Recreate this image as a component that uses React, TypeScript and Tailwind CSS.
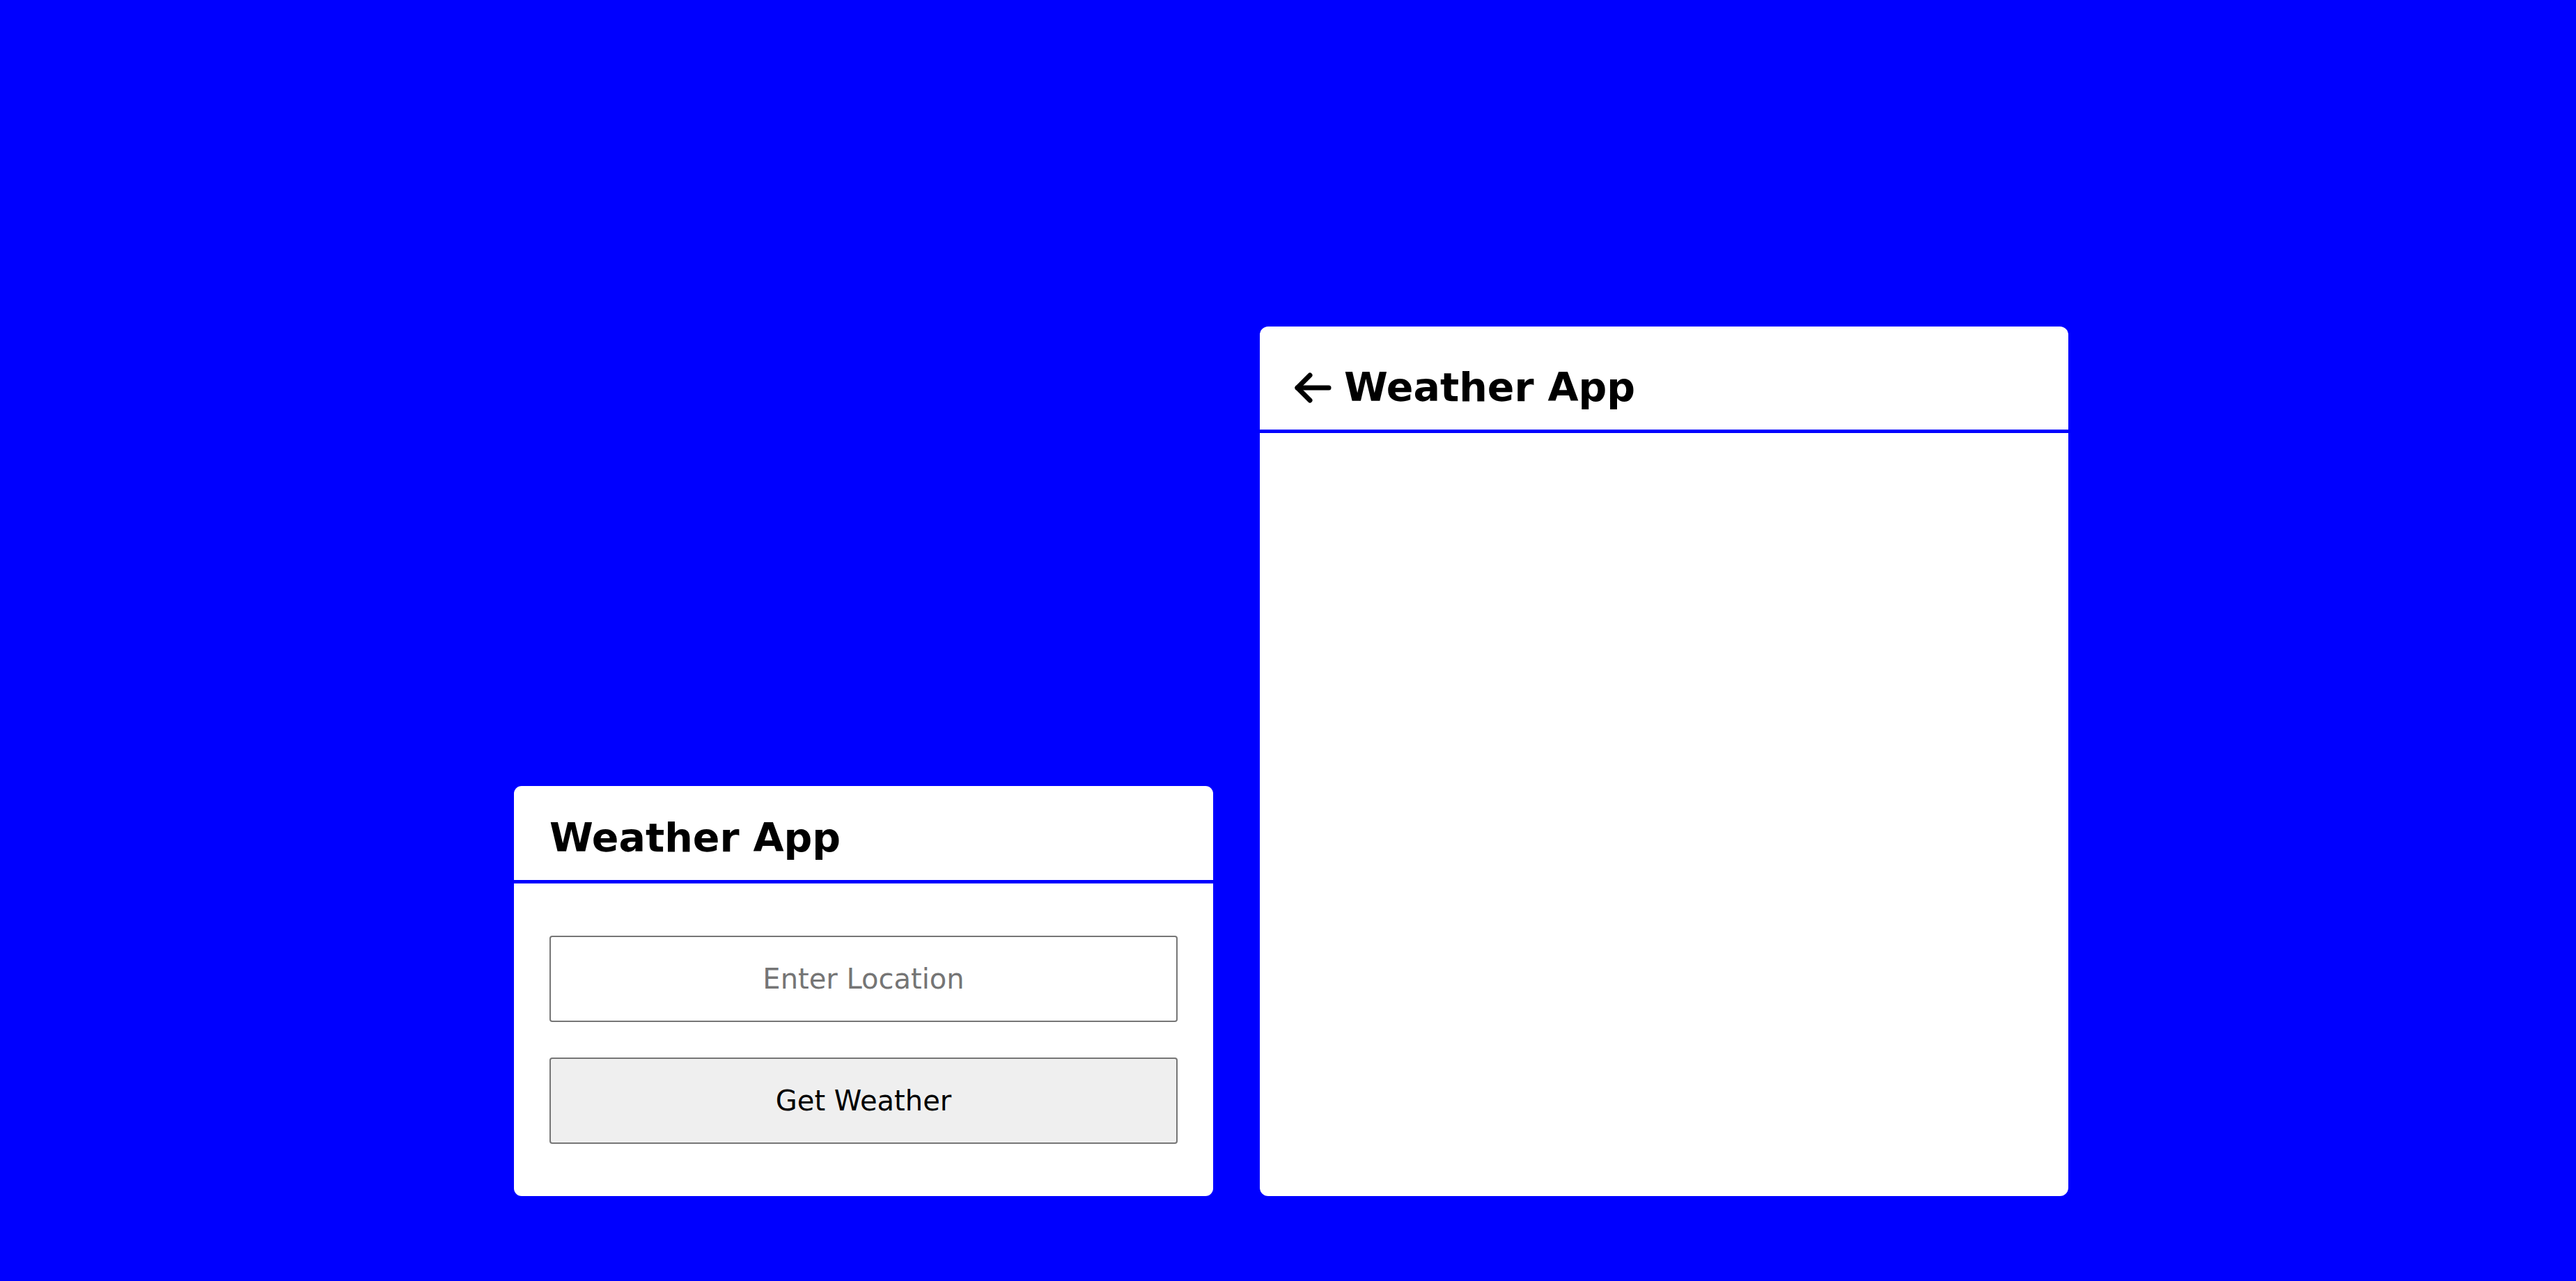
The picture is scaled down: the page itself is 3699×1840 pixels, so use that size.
import React from 'react';

const font = { fontFamily: '"DejaVu Sans", "Liberation Sans", sans-serif' };

const BackArrow: React.FC = () => (
  <svg width="53" height="44" viewBox="0 0 53 44" fill="none" stroke="#000" strokeWidth="7" strokeLinecap="round" strokeLinejoin="round">
    <path d="M22 4 L4 22 L22 40" />
    <path d="M4 22 H49" />
  </svg>
);

const SearchCard: React.FC = () => (
  <div className="w-[1004px] h-[589px] bg-white rounded-[11px] flex flex-col overflow-hidden">
    <div className="h-[140px] pt-[46px] pl-[51px] border-b-[5px] border-[#0000ff] shrink-0">
      <h1 className="text-[57px] leading-none font-bold text-black">Weather App</h1>
    </div>
    <div className="flex flex-col gap-[51px] px-[51px] pt-[75px]">
      <input
        type="text"
        placeholder="Enter Location"
        className="h-[124px] w-full border-2 border-[#767676] rounded-[4px] bg-white text-center text-[40px] text-black placeholder:text-[#757575] outline-none"
        style={font}
      />
      <button
        type="button"
        className="h-[124px] w-full border-2 border-[#767676] rounded-[4px] bg-[#efefef] text-center text-[40px] text-black"
        style={font}
      >
        Get Weather
      </button>
    </div>
  </div>
);

const DetailCard: React.FC = () => (
  <div className="w-[1161px] h-[1249px] bg-white rounded-[12px] flex flex-col overflow-hidden">
    <div className="h-[153px] border-b-[5px] border-[#0000ff] pl-[50px] pt-[59px] shrink-0">
      <div className="flex items-center gap-[18px]">
        <BackArrow />
        <h1 className="text-[57px] leading-none font-bold text-black">Weather App</h1>
      </div>
    </div>
    <div className="flex-1" />
  </div>
);

export default function App() {
  return (
    <div
      className="w-full h-[1840px] bg-[#0000ff] flex items-end justify-center gap-[67px] pb-[122px] pl-[9px]"
      style={font}
    >
      <SearchCard />
      <DetailCard />
    </div>
  );
}
